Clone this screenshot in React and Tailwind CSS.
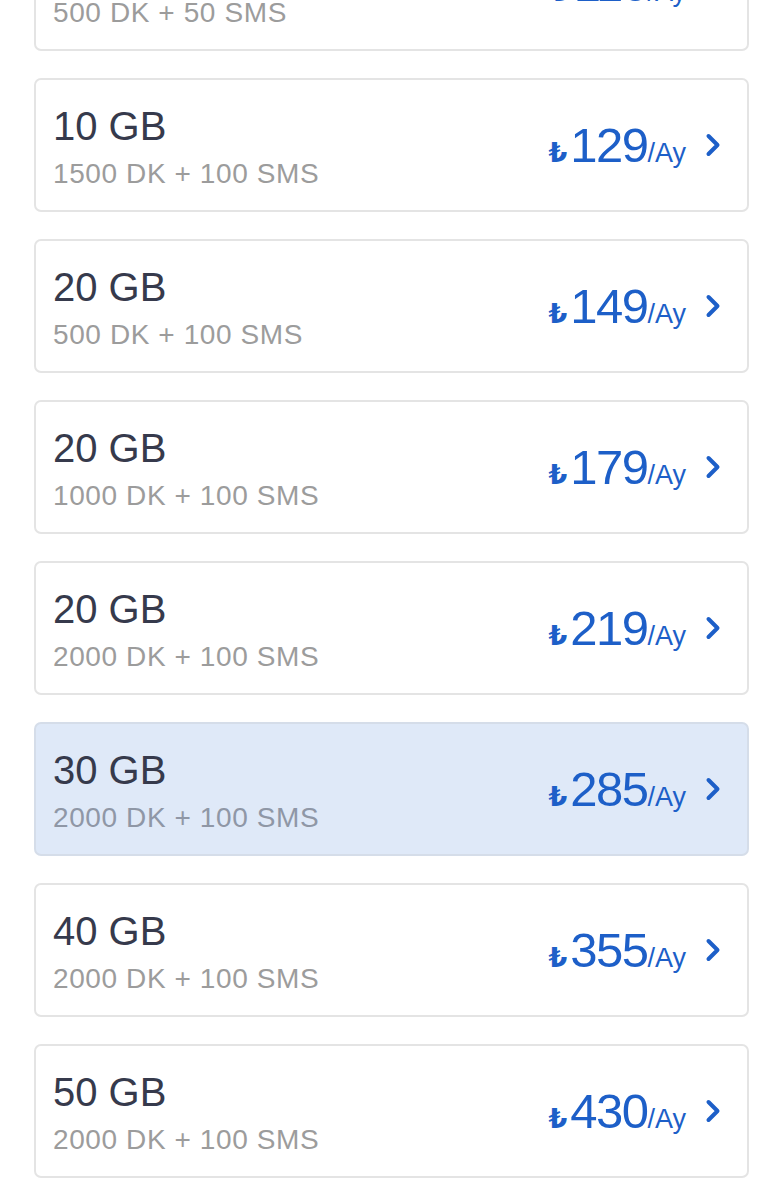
import React from 'react';

const plans = [
  { gb: '5 GB', desc: '500 DK + 50 SMS', price: '110' },
  { gb: '10 GB', desc: '1500 DK + 100 SMS', price: '129' },
  { gb: '20 GB', desc: '500 DK + 100 SMS', price: '149' },
  { gb: '20 GB', desc: '1000 DK + 100 SMS', price: '179' },
  { gb: '20 GB', desc: '2000 DK + 100 SMS', price: '219' },
  { gb: '30 GB', desc: '2000 DK + 100 SMS', price: '285', active: true },
  { gb: '40 GB', desc: '2000 DK + 100 SMS', price: '355' },
  { gb: '50 GB', desc: '2000 DK + 100 SMS', price: '430' },
];

function Chevron() {
  return (
    <svg width="16" height="24" viewBox="0 0 16 24" fill="none" className="shrink-0">
      <path d="M3.5 3 L12.5 12 L3.5 21" stroke="#1d5fc8" strokeWidth="4" strokeLinecap="round" strokeLinejoin="round" />
    </svg>
  );
}

function PlanCard({ gb, desc, price, active }) {
  return (
    <div
      className={`h-[134px] rounded-[7px] border-2 flex items-center justify-between pl-[17px] pr-[26px] ${
        active ? 'bg-[#dfe9f8] border-[#d5dde9]' : 'bg-white border-[#e4e4e4]'
      }`}
    >
      <div className="pt-[4px]">
        <div className="text-[40px] leading-[44px] text-[#363a4c]">{gb}</div>
        <div className={`mt-[10px] text-[28px] leading-[32px] tracking-[0.6px] ${active ? 'text-[#8f97a6]' : 'text-[#9c9c9c]'}`}>
          {desc}
        </div>
      </div>
      <div className="flex items-center gap-[19px]">
        <div className="flex items-baseline text-[#1d5fc8]">
          <span className="text-[27px] leading-none mr-[3px] font-bold" style={{ fontFamily: '"DejaVu Sans", sans-serif' }}>₺</span>
          <span className="text-[49px] leading-none tracking-[-1.5px]">{price}</span>
          <span className="text-[27px] leading-none">/Ay</span>
        </div>
        <Chevron />
      </div>
    </div>
  );
}

export default function App() {
  return (
    <div className="w-[783px] h-[1200px] overflow-hidden bg-white" style={{ fontFamily: '"Liberation Sans", Arial, sans-serif' }}>
      <div className="-mt-[83px] px-[34px] flex flex-col gap-[27px]">
        {plans.map((p, i) => (
          <PlanCard key={i} {...p} />
        ))}
      </div>
    </div>
  );
}
